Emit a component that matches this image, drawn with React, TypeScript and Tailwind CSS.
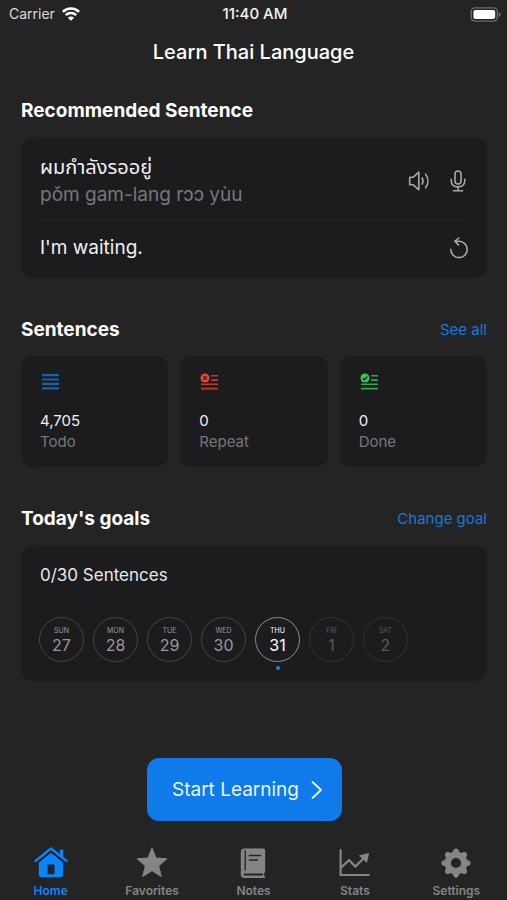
import React from 'react';
import clsx from 'clsx';

const stats = [
  { icon: TodoIcon, value: '4,705', label: 'Todo' },
  { icon: RepeatIcon, value: '0', label: 'Repeat' },
  { icon: DoneIcon, value: '0', label: 'Done' },
];

const days = [
  { name: 'SUN', date: 27, state: 'past' },
  { name: 'MON', date: 28, state: 'past' },
  { name: 'TUE', date: 29, state: 'past' },
  { name: 'WED', date: 30, state: 'past' },
  { name: 'THU', date: 31, state: 'today' },
  { name: 'FRI', date: 1, state: 'future' },
  { name: 'SAT', date: 2, state: 'future' },
];

const tabs = [
  { icon: HomeIcon, label: 'Home', active: true },
  { icon: StarIcon, label: 'Favorites', active: false },
  { icon: NotesIcon, label: 'Notes', active: false },
  { icon: StatsIcon, label: 'Stats', active: false },
  { icon: SettingsIcon, label: 'Settings', active: false },
];

/* Status bar icons */

function WifiIcon() {
  return (
    <svg width="18" height="14" viewBox="0 0 18 14" fill="none" aria-hidden="true">
      <path d="M.9 4.8a11.6 11.6 0 0 1 16.200 0" stroke="#fff" strokeWidth="2.5" />
      <path d="M3.800 8.100a7.400 7.400 0 0 1 10.400 0" stroke="#fff" strokeWidth="2.400" />
      <path d="M9 13.800 5.900 10.700a4.400 4.400 0 0 1 6.200 0Z" fill="#fff" />
    </svg>
  );
}

function BatteryIcon() {
  return (
    <svg width="31" height="15" viewBox="0 0 31 15" fill="none" aria-hidden="true">
      <rect x="1.200" y="0.900" width="26.200" height="13.200" rx="4" stroke="#6c6c6c" strokeWidth="1.400" />
      <rect x="3.400" y="3" width="21.800" height="9" rx="2" fill="#fff" />
      <path d="M28.800 5.200c1.200.4 1.900 1.300 1.900 2.300s-.7 1.900-1.900 2.300Z" fill="#6c6c6c" />
    </svg>
  );
}

/* Sentence card icons */

function SpeakerIcon() {
  return (
    <svg width="22" height="22" viewBox="0 0 22 22" fill="none" stroke="#a8a8a8" strokeWidth="1.600" strokeLinejoin="round" strokeLinecap="round" aria-hidden="true">
      <path d="M1.700 7.200h3.600l5.500-5v17.600l-5.500-5H1.700Z" />
      <path d="M14.200 8c1.100 1.900 1.100 4.100 0 6" />
      <path d="M17.600 4.200c3.100 4.100 3.100 9.500 0 13.600" />
    </svg>
  );
}

function MicIcon() {
  return (
    <svg width="20" height="22" viewBox="0 0 20 22" fill="none" stroke="#a8a8a8" strokeWidth="1.600" strokeLinecap="round" aria-hidden="true">
      <rect x="7" y="1" width="6" height="13" rx="3" />
      <path d="M3.200 9.200v1.600c0 3.900 2.900 6.100 6.800 6.100s6.800-2.200 6.800-6.100V9.200M10 17v3.800M5.400 20.800h9.200" />
    </svg>
  );
}

function ReplayIcon() {
  return (
    <svg width="20" height="22" viewBox="0 0 20 22" fill="none" stroke="#a8a8a8" strokeWidth="1.600" strokeLinecap="round" strokeLinejoin="round" aria-hidden="true">
      <path d="M2.800 12.400a8.200 8.200 0 1 0 8.200-8.200H7.200" />
      <path d="M10.800 1 7 4.200l3.400 3.700" />
    </svg>
  );
}

/* Stat card icons */

function TodoIcon() {
  return (
    <svg width="20" height="18" viewBox="-1 0 20 18" fill="#1b5fa6" aria-hidden="true">
      <path d="M1 1h17v2.200H1zM1 5.400h17v2.200H1zM1 9.800h17V12H1zM1 14.200h17v2.200H1z" />
    </svg>
  );
}

function RepeatIcon() {
  return (
    <svg width="20" height="18" viewBox="-1 0 20 18" aria-hidden="true">
      <path d="M11 2h7v1.600h-7zM11 6.300h7v1.600h-7zM1 10.400h17V12H1zM1 14.800h17v1.600H1z" fill="#c0392f" />
      <circle cx="5" cy="5" r="4.500" fill="#ef4135" />
      <path d="m3.400 3.400 3.200 3.200M6.600 3.400 3.400 6.600" stroke="#1c1c1e" strokeWidth="1.300" />
    </svg>
  );
}

function DoneIcon() {
  return (
    <svg width="20" height="18" viewBox="-1 0 20 18" fill="none" aria-hidden="true">
      <path d="M11 2h7v1.600h-7zM11 6.300h7v1.600h-7zM1 10.400h17V12H1zM1 14.800h17v1.600H1z" fill="#2fa84a" />
      <circle cx="5" cy="5" r="4.500" fill="#34c956" />
      <path d="m2.800 5.100 1.600 1.600 2.900-3" stroke="#1c1c1e" strokeWidth="1.300" />
    </svg>
  );
}

/* Tab bar icons */

function HomeIcon() {
  return (
    <svg width="34" height="32" viewBox="0 0 34 32" fill="currentColor" aria-hidden="true">
      <path d="M25.800 2.800h3.400v9l-3.400-3Z" />
      <path
        fillRule="evenodd"
        d="M17 5.800 29.200 15.600v11.800c0 1.800-.9 2.800-2.700 2.800h-19c-1.800 0-2.700-1-2.700-2.800V15.600ZM13.600 17.400v9.800h7v-9.800Z"
      />
      <path d="M2.900 15.900 17 4.500l14.100 11.400" fill="none" stroke="#242424" strokeWidth="1.400" />
      <path d="M1.600 13.900 17 1.500l15.400 12.400" fill="none" stroke="currentColor" strokeWidth="2.400" strokeLinecap="round" strokeLinejoin="round" />
    </svg>
  );
}

function StarIcon() {
  return (
    <svg width="34" height="32" viewBox="0 0 34 32" fill="currentColor" stroke="currentColor" strokeWidth="1.200" strokeLinejoin="round" aria-hidden="true">
      <path d="m17 1.100 4 10 10.700.7-8.200 6.900 2.600 10.600L17 23.400l-9.100 5.900 2.600-10.600-8.200-6.900 10.700-.7Z" />
    </svg>
  );
}

function NotesIcon() {
  return (
    <svg width="34" height="32" viewBox="0 0 34 32" fill="none" aria-hidden="true">
      <path
        d="M8.400 1.400h18.800c1.200 0 2 .8 2 2v20.800c0 .7-.3 1.200-.8 1.500-.3 1.400-.3 2.400 0 3.400.5.2.8.5.8 1s-.4.900-1 .900H8.400c-2.200 0-3.600-1.400-3.600-3.600V5c0-2.200 1.400-3.600 3.600-3.600Z"
        fill="currentColor"
      />
      <path d="M9.200 3.200v20.600" stroke="#242424" strokeWidth="1.300" />
      <path d="M8.600 27.500h17.600" stroke="#242424" strokeWidth="2.200" strokeLinecap="round" />
      <path d="M12.800 8.600h12.400M12.800 13h9.200" stroke="#242424" strokeWidth="1.500" />
    </svg>
  );
}

function StatsIcon() {
  return (
    <svg width="34" height="32" viewBox="0 0 34 32" fill="none" stroke="currentColor" strokeWidth="2.200" aria-hidden="true">
      <path d="M2.600 3v25h28.200" strokeLinecap="round" strokeLinejoin="round" />
      <path d="m3 20.600 8.100-7.600 6.200 6.600 9.400-9.400" />
      <path d="m31.200 6-2.400 10-8-7.400Z" fill="currentColor" stroke="none" />
    </svg>
  );
}

function SettingsIcon() {
  return (
    <svg width="34" height="32" viewBox="0 0 34 32" fill="none" stroke="currentColor" aria-hidden="true">
      <circle cx="17" cy="16" r="8.300" strokeWidth="6.400" />
      <path
        d="M17 4.200v3M17 24.800v3M5.200 16h3M25.800 16h3M8.800 7.800l2 2M23.200 22.200l2 2M8.800 24.200l2-2M23.200 9.800l2-2"
        strokeWidth="5.600"
        strokeLinecap="round"
      />
    </svg>
  );
}

interface SectionHeaderProps {
  title: string;
  action?: string;
}

function SectionHeader({ title, action }: SectionHeaderProps) {
  return (
    <div className="flex items-center justify-between h-6 mb-3.5">
      <h2 className="font-bold text-[19px] leading-6 text-white">{title}</h2>
      {action && (
        <a href="#" className="text-[15px] leading-6 text-[#1878dc]">
          {action}
        </a>
      )}
    </div>
  );
}

export default function App() {
  return (
    <div className="min-h-screen flex flex-col bg-[#242424] text-white font-['Inter','Noto_Sans_Thai','Noto_Sans',sans-serif]">
      {/* Status Bar */}
      <div className="grid grid-cols-3 items-center h-7 pl-[9px] pr-1.5 text-[14px] leading-5">
        <div className="flex items-center gap-[7px] text-[#dcdcdc]">
          <span>Carrier</span>
          <WifiIcon />
        </div>
        <span className="text-center font-medium text-[15px] text-[#f4f4f4]">11:40 AM</span>
        <div className="flex justify-end">
          <BatteryIcon />
        </div>
      </div>

      <header className="h-12 flex items-center justify-center">
        <h1 className="font-medium text-[20px] leading-6">Learn Thai Language</h1>
      </header>

      <main className="flex flex-col pl-[21px] pr-5 pt-[23px]">
        {/* Recommended Sentence */}
        <section>
          <SectionHeader title="Recommended Sentence" />
          <div className="bg-[#1c1c1e] rounded-xl px-[19px]">
            <div className="flex items-center justify-between h-[84px] pt-1 border-b border-[#28282a]">
              <div>
                <p lang="th" className="text-[20px] leading-7 text-[#f0f0f0]">ผมกำลังรออยู่</p>
                <p className="text-[19px] leading-7 text-[#77777a]">pǒm gam-lang rɔɔ yùu</p>
              </div>
              <div className="flex items-center gap-[18px]">
                <button aria-label="Play sentence" className="cursor-pointer">
                  <SpeakerIcon />
                </button>
                <button aria-label="Record sentence" className="cursor-pointer">
                  <MicIcon />
                </button>
              </div>
            </div>
            <div className="flex items-center justify-between h-[57px] pb-1">
              <p className="text-[19px] leading-7 text-[#f0f0f0]">I'm waiting.</p>
              <button aria-label="Another sentence" className="cursor-pointer">
                <ReplayIcon />
              </button>
            </div>
          </div>
        </section>

        {/* Sentence Counters */}
        <section className="pt-10">
          <SectionHeader title="Sentences" action="See all" />
          <div className="grid grid-cols-3 gap-3">
            {stats.map((stat) => {
              const StatIcon = stat.icon;
              return (
                <div key={stat.label} className="bg-[#1c1c1e] rounded-xl px-[19px] pt-[17px] pb-[15px]">
                  <StatIcon />
                  <p className="mt-[19px] text-[15px] leading-[21px] text-[#f0f0f0]">{stat.value}</p>
                  <p className="text-[15px] leading-[21px] text-[#77777a]">{stat.label}</p>
                </div>
              );
            })}
          </div>
        </section>

        {/* Goals */}
        <section className="pt-10">
          <SectionHeader title="Today's goals" action="Change goal" />
          <div className="bg-[#1c1c1e] rounded-xl px-[18px] pt-[18px] pb-[19px]">
            <p className="px-px text-[17px] leading-6 text-[#e8e8e8]">0/30 Sentences</p>
            <div className="flex gap-[9px] mt-[30px]">
              {days.map((day) => (
                <div
                  key={day.name}
                  className={clsx(
                    'relative w-[45px] h-[45px] rounded-full border flex flex-col items-center justify-center',
                    day.state === 'past' && 'border-[#444446] text-[#98989a]',
                    day.state === 'today' && 'border-[#8c8c8e] text-white',
                    day.state === 'future' && 'border-[#323234] text-[#59595b]'
                  )}
                >
                  <span className="text-[7px] leading-[10px]">{day.name}</span>
                  <span className="text-[16px] leading-[18px]">{day.date}</span>
                  {day.state === 'today' && (
                    <span className="absolute top-12 w-1 h-1 rounded-full bg-[#1a84f0]" />
                  )}
                </div>
              ))}
            </div>
          </div>
        </section>
      </main>

      <div className="mt-auto pr-[18px] flex justify-center">
        <button className="flex items-center gap-3 h-[63px] pl-[25px] pr-5 rounded-xl bg-[#0f7aea] text-[19px] leading-6 text-[#eaf4ff] cursor-pointer">
          Start Learning
          <svg width="11" height="18" viewBox="0 0 11 18" fill="none" stroke="currentColor" strokeWidth="1.800" strokeLinecap="round" strokeLinejoin="round" aria-hidden="true">
            <path d="m1.500 1 8.500 8-8.500 8" />
          </svg>
        </button>
      </div>

      {/* Tab Bar */}
      <nav className="grid grid-cols-5 mt-[26px] pb-px">
        {tabs.map((tab) => {
          const TabIcon = tab.icon;
          return (
            <a
              key={tab.label}
              href="#"
              aria-current={tab.active ? 'page' : undefined}
              className={clsx('flex flex-col items-center', tab.active ? 'text-[#0a84ff]' : 'text-[#858585]')}
            >
              <TabIcon />
              <span className="mt-1 text-[12px] leading-4 font-semibold">{tab.label}</span>
            </a>
          );
        })}
      </nav>
    </div>
  );
}
